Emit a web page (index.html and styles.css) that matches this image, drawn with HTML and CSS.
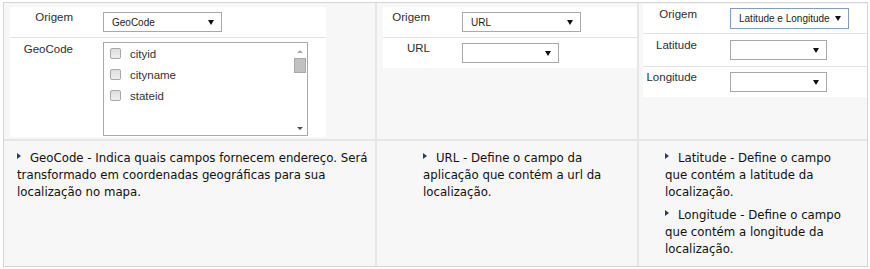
FILE: index.html
```html
<!DOCTYPE html>
<html lang="pt">
<head>
    <meta charset="UTF-8">
    <title>Origem da localização</title>
    <link rel="stylesheet" href="styles.css">
</head>
<body>
    <div class="frame">
        <!-- GeoCode -->
        <div class="cell top col1">
            <div class="panel panel1">
                <div class="row">
                    <span class="lbl">Origem</span>
                    <div class="select wide"><span>GeoCode</span><i class="arrow"></i></div>
                </div>
                <div class="row list-row">
                    <span class="lbl">GeoCode</span>
                    <div class="listbox">
                        <div class="items">
                            <label class="item"><span class="check"></span>cityid</label>
                            <label class="item"><span class="check"></span>cityname</label>
                            <label class="item"><span class="check"></span>stateid</label>
                        </div>
                        <div class="scrollbar">
                            <span class="sb-up"></span>
                            <span class="sb-thumb"></span>
                            <span class="sb-down"></span>
                        </div>
                    </div>
                </div>
            </div>
        </div>

        <!-- URL -->
        <div class="cell top col2">
            <div class="panel panel2">
                <div class="row">
                    <span class="lbl">Origem</span>
                    <div class="select wide"><span>URL</span><i class="arrow"></i></div>
                </div>
                <div class="row">
                    <span class="lbl">URL</span>
                    <div class="select"><span></span><i class="arrow"></i></div>
                </div>
            </div>
        </div>

        <!-- Latitude e Longitude -->
        <div class="cell top col3">
            <div class="panel panel3">
                <div class="row">
                    <span class="lbl">Origem</span>
                    <div class="select wide focus"><span>Latitude e Longitude</span><i class="arrow"></i></div>
                </div>
                <div class="row">
                    <span class="lbl">Latitude</span>
                    <div class="select"><span></span><i class="arrow"></i></div>
                </div>
                <div class="row">
                    <span class="lbl">Longitude</span>
                    <div class="select"><span></span><i class="arrow"></i></div>
                </div>
            </div>
        </div>

        <div class="cell bottom col1">
            <p class="help"><i class="bullet"></i>GeoCode - Indica quais campos fornecem endereço. Será transformado em coordenadas geográficas para sua localização no mapa.</p>
        </div>
        <div class="cell bottom col2">
            <p class="help"><i class="bullet"></i>URL - Define o campo da aplicação que contém a url da localização.</p>
        </div>
        <div class="cell bottom col3">
            <p class="help"><i class="bullet"></i>Latitude - Define o campo que contém a latitude da localização.</p>
            <p class="help"><i class="bullet"></i>Longitude - Define o campo que contém a longitude da localização.</p>
        </div>
    </div>
</body>
</html>
```

FILE: styles.css
```css
body {
    margin: 0;
    font-family: 'Liberation Sans', Arial, sans-serif;
    background: #ffffff;
}

.frame {
    box-sizing: border-box;
    width: 865px;
    height: 265px;
    margin: 2px 0 0 3px;
    border: 1px solid #d4d4d4;
    background: #f7f7f7;
    display: grid;
    grid-template-columns: 373px 262px 228px;
    grid-template-rows: 138px 125px;
}

.cell {
    box-sizing: border-box;
}

.cell.top {
    border-bottom: 2px solid #e6e6e6;
}

.cell.col1,
.cell.col2 {
    border-right: 2px solid #e6e6e6;
}

/* white form panels */
.panel {
    background: #ffffff;
}

.panel1 {
    width: 316px;
    margin: 4px 0 0 6px;
}

.panel2 {
    width: 254px;
    margin: 4px 0 0 6px;
}

.panel3 {
    width: 224px;
    margin: 1px 0 0 4px;
}

.row {
    display: flex;
    align-items: flex-start;
    box-sizing: border-box;
    height: 31px;
    padding-top: 5px;
    border-bottom: 1px solid #e3e3e3;
}

.row:last-child {
    border-bottom: none;
    height: 30px;
}

.panel1 .row:last-child {
    height: 99px;
    padding-top: 4px;
}

.lbl {
    display: block;
    font-size: 11.5px;
    line-height: 14px;
    color: #2e2e2e;
    text-align: right;
    margin-top: -2px;
}

.panel1 .lbl { width: 63px; margin-right: 30px; }
.panel2 .lbl { width: 47px; margin-right: 32px; }
.panel3 .lbl { width: 54px; margin-right: 33px; }

.panel1 .list-row .lbl { margin-top: 0; }
.panel3 .row:first-child { padding-top: 4px; height: 30px; }
.panel3 .row:first-child .lbl { margin-top: -1px; }
.panel3 .row:nth-child(2) { padding-top: 6px; height: 33px; }

/* fake select boxes */
.select {
    box-sizing: border-box;
    width: 97px;
    height: 20px;
    border: 1px solid #a9a9a9;
    background: #ffffff;
    display: flex;
    align-items: center;
    justify-content: space-between;
    padding: 0 7px 0 8px;
    font-size: 10px;
    color: #222222;
}

.select.wide {
    width: 119px;
}

.select.focus {
    height: 21px;
    border-color: #7f9dc9;
}

.arrow {
    width: 0;
    height: 0;
    border-left: 3px solid transparent;
    border-right: 3px solid transparent;
    border-top: 5px solid #111111;
}

/* checkbox list */
.listbox {
    box-sizing: border-box;
    width: 205px;
    height: 94px;
    border: 1px solid #a5a9b0;
    display: flex;
}

.items {
    flex: 1;
}

.item {
    display: flex;
    align-items: center;
    height: 21px;
    padding-left: 6px;
    font-size: 11.5px;
    color: #333333;
}

.check {
    box-sizing: border-box;
    width: 11px;
    height: 11px;
    margin-right: 9px;
    border: 1px solid #a8a8a8;
    border-radius: 2px;
    background: linear-gradient(#dedede, #eeeeee);
}

.scrollbar {
    width: 15px;
    display: flex;
    flex-direction: column;
    align-items: center;
    padding: 7px 0 5px;
    box-sizing: border-box;
}

.sb-up {
    width: 0;
    height: 0;
    border-left: 3px solid transparent;
    border-right: 3px solid transparent;
    border-bottom: 3px solid #a8a8a8;
}

.sb-thumb {
    box-sizing: border-box;
    width: 12px;
    height: 15px;
    margin-top: 5px;
    background: #c1c1c1;
    border: 1px solid #a9a9a9;
}

.sb-down {
    margin-top: auto;
    width: 0;
    height: 0;
    border-left: 3px solid transparent;
    border-right: 3px solid transparent;
    border-top: 3px solid #505050;
}

/* help texts */
.cell.bottom {
    padding-top: 9px;
}

.cell.bottom.col1 { padding-left: 13px; padding-right: 3px; }
.cell.bottom.col2 { padding-left: 46px; padding-right: 29px; }
.cell.bottom.col3 { padding-left: 26px; padding-right: 17px; }

.help {
    margin: 0 0 6px;
    font-family: 'DejaVu Sans', Verdana, sans-serif;
    font-size: 11.75px;
    line-height: 17px;
    color: #111111;
}

.bullet {
    display: inline-block;
    width: 0;
    height: 0;
    margin-right: 9px;
    vertical-align: 3px;
    border-top: 3px solid transparent;
    border-bottom: 3px solid transparent;
    border-left: 4px solid #2c3e5c;
}
```
